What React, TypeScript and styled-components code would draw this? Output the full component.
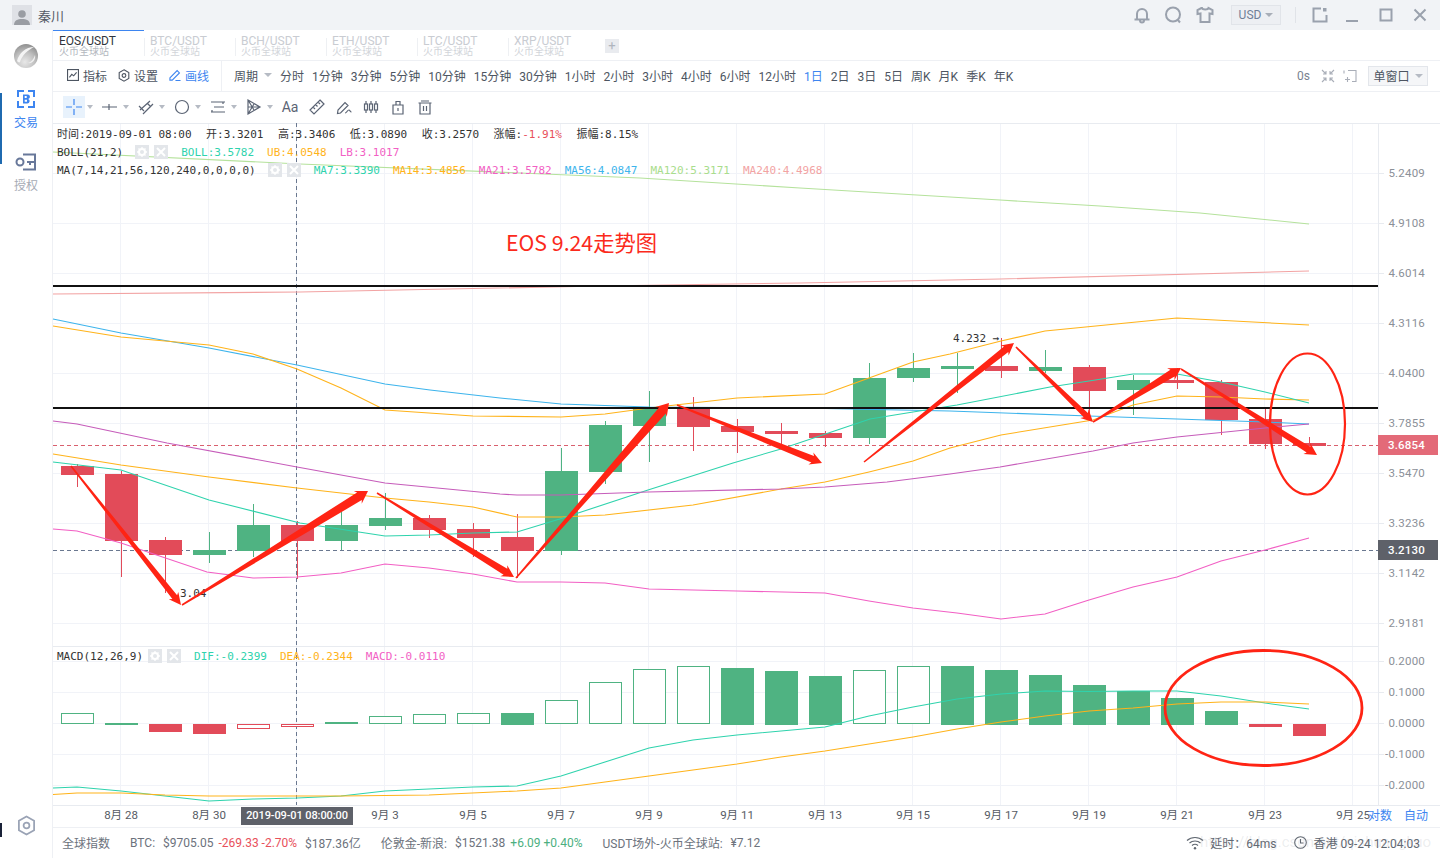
import React from "react";
import styled, { createGlobalStyle } from "styled-components";

const UI_FONT = `Roboto, "Noto Sans CJK SC", sans-serif`;
const MONO_FONT = `"DejaVu Sans Mono", "Noto Sans CJK SC", monospace`;

const GlobalStyle = createGlobalStyle`
  html, body { margin: 0; padding: 0; background: #fff; }
  body { font-family: ${UI_FONT}; overflow: hidden; }
`;

/* ---------- page frame ---------- */
const Page = styled.div`
  width: 1440px;
  height: 858px;
  display: flex;
  flex-direction: column;
  overflow: hidden;
  background: #fff;
`;
const TitleBar = styled.header`
  height: 30px;
  flex: none;
  display: flex;
  align-items: center;
  background: #f1f3f6;
  padding: 0 12px;
`;
const Avatar = styled.div`
  width: 20px;
  height: 20px;
  background: #dfe1e6;
  display: flex;
  align-items: flex-end;
  justify-content: center;
  overflow: hidden;
`;
const UserName = styled.span`
  margin-left: 6px;
  font-size: 13px;
  color: #555b66;
`;
const TitleActions = styled.div`
  margin-left: auto;
  display: flex;
  align-items: center;
  color: #9aa1ad;
`;
const TitleSlot = styled.span<{ $w: number }>`
  width: ${(p) => p.$w}px;
  display: flex;
  justify-content: center;
`;
const CurrencyBox = styled.div`
  width: 50px;
  height: 20px;
  margin: 0 14px 0 10px;
  box-sizing: border-box;
  border: 1px solid #e1e4e9;
  background: #edeff3;
  display: flex;
  align-items: center;
  justify-content: center;
  gap: 4px;
  font-size: 12px;
  color: #6f7f98;
`;
const TitleDivider = styled.span`
  width: 1px;
  height: 16px;
  background: #e0e3e8;
`;
const Shell = styled.div`
  flex: 1;
  display: flex;
  min-height: 0;
`;

/* ---------- left rail ---------- */
const Rail = styled.nav`
  width: 53px;
  flex: none;
  box-sizing: border-box;
  position: relative;
  border-right: 1px solid #eef0f4;
  display: flex;
  flex-direction: column;
  align-items: center;
  padding-top: 13px;
`;
const RailMark = styled.span<{ $top: number; $h: number; $c: string }>`
  position: absolute;
  left: 0;
  top: ${(p) => p.$top}px;
  width: 2px;
  height: ${(p) => p.$h}px;
  background: ${(p) => p.$c};
`;
const RailItem = styled.div<{ $active?: boolean; $gap: number }>`
  margin-top: ${(p) => p.$gap}px;
  display: flex;
  flex-direction: column;
  align-items: center;
  gap: 8px;
  font-size: 12px;
  line-height: 15px;
  color: ${(p) => (p.$active ? "#3d85f0" : "#a6abb5")};
`;
const RailFoot = styled.div`
  margin-top: auto;
  margin-bottom: 21px;
  color: #9aa3b5;
`;
const Main = styled.main`
  flex: 1;
  display: flex;
  flex-direction: column;
  min-width: 0;
`;

/* ---------- symbol tabs ---------- */
const TabRow = styled.div`
  height: 30px;
  flex: none;
  display: flex;
  align-items: stretch;
`;
const Tab = styled.div<{ $active?: boolean }>`
  width: 91px;
  box-sizing: border-box;
  padding: 4px 0 0 6px;
  position: relative;
  border-top: 1px solid ${(p) => (p.$active ? "#3d85f0" : "transparent")};
  color: ${(p) => (p.$active ? "#30343c" : "#c9ccd2")};
  &:not(:first-child)::before {
    content: "";
    position: absolute;
    left: 0;
    top: 7px;
    height: 18px;
    width: 1px;
    background: #eef0f3;
  }
`;
const TabSymbol = styled.div`
  font-size: 12px;
  line-height: 12px;
`;
const TabVenue = styled.div<{ $active?: boolean }>`
  font-size: 10px;
  line-height: 10px;
  color: ${(p) => (p.$active ? "#b3b7be" : "#d2d5da")};
`;
const AddTab = styled.div`
  width: 14px;
  height: 14px;
  align-self: center;
  margin: 1px 0 0 6px;
  background: #e9ebef;
  color: #b0b5bd;
  font-size: 13px;
  line-height: 13px;
  text-align: center;
`;

/* ---------- period toolbar ---------- */
const PeriodBar = styled.div`
  height: 32px;
  flex: none;
  box-sizing: border-box;
  border-top: 1px solid #eef0f4;
  border-bottom: 1px solid #eef0f4;
  display: flex;
  align-items: center;
  font-size: 12px;
  color: #4d5561;
`;
const ToolGroup = styled.div`
  display: flex;
  align-items: center;
  gap: 11px;
  height: 100%;
  box-sizing: border-box;
  padding: 0 12px 2px 14px;
  border-right: 1px solid #eef0f4;
`;
const ToolLink = styled.span<{ $blue?: boolean }>`
  display: flex;
  align-items: center;
  gap: 4px;
  color: ${(p) => (p.$blue ? "#3d85f0" : "#4d5561")};
`;
const Periods = styled.div`
  display: flex;
  align-items: center;
  gap: 8px;
  padding: 0 0 2px 12px;
`;
const Period = styled.span<{ $on?: boolean }>`
  color: ${(p) => (p.$on ? "#3d85f0" : "#4d5561")};
  white-space: nowrap;
`;
const PeriodLabel = styled.span`
  display: flex;
  align-items: center;
  gap: 6px;
`;
const Caret = styled.i<{ $c?: string }>`
  display: block;
  width: 0;
  height: 0;
  border-left: 4px solid transparent;
  border-right: 4px solid transparent;
  border-top: 4px solid ${(p) => p.$c ?? "#b6bbc4"};
`;
const SmallCaret = styled(Caret)`
  border-left-width: 3px;
  border-right-width: 3px;
`;
const BarRight = styled.div`
  margin-left: auto;
  display: flex;
  align-items: center;
  padding: 0 12px 1px 0;
  color: #7a8290;
`;
const Countdown = styled.span`
  margin-right: 11px;
`;
const BarIcons = styled.span`
  display: flex;
  align-items: center;
  gap: 8px;
  color: #a9aeb8;
`;
const WindowSelect = styled.div`
  width: 60px;
  height: 20px;
  margin-left: 11px;
  box-sizing: border-box;
  border: 1px solid #e3e6eb;
  background: #f5f6f8;
  display: flex;
  align-items: center;
  justify-content: center;
  gap: 5px;
  color: #4d5561;
`;

/* ---------- drawing toolbar ---------- */
const DrawBar = styled.div`
  height: 31px;
  flex: none;
  box-sizing: border-box;
  padding: 4px 0 0 10px;
  display: flex;
  align-items: flex-start;
  color: #5b6474;
`;
const DrawTool = styled.div`
  width: 36px;
  display: flex;
  align-items: center;
  gap: 2px;
`;
const DrawButton = styled.div<{ $on?: boolean }>`
  width: 22px;
  height: 22px;
  flex: none;
  display: flex;
  align-items: center;
  justify-content: center;
  background: ${(p) => (p.$on ? "#e8f2fc" : "transparent")};
  font-size: 14px;
  color: inherit;
`;
const PlainTools = styled.div`
  display: flex;
  gap: 5px;
`;

/* ---------- chart ---------- */
const ChartPane = styled.section`
  flex: 1;
  position: relative;
  min-height: 0;
`;
const ChartSvg = styled.svg`
  position: absolute;
  left: 0;
  top: 0;
  display: block;
`;
const LegendStack = styled.div`
  position: absolute;
  left: 4px;
  top: 2px;
  display: flex;
  flex-direction: column;
  font-family: ${MONO_FONT};
  font-size: 11px;
  color: #333;
`;
const MacdLegend = styled(LegendStack)`
  top: 524px;
`;
const LegendRow = styled.div`
  height: 18px;
  display: flex;
  align-items: center;
  white-space: nowrap;
`;
const QuoteRow = styled(LegendRow)`
  box-sizing: border-box;
  padding-bottom: 2px;
`;
const Reading = styled.span<{ $c?: string; $gap?: number }>`
  margin-left: ${(p) => p.$gap ?? 13}px;
  color: ${(p) => p.$c ?? "inherit"};
  &:first-child { margin-left: 0; }
`;
const MiniButton = styled.span<{ $gap: number }>`
  width: 14px;
  height: 14px;
  margin-left: ${(p) => p.$gap}px;
  background: #e3e6ea;
  display: flex;
  align-items: center;
  justify-content: center;
  flex: none;
`;
const ScaleSwitch = styled.div`
  position: absolute;
  right: 12px;
  bottom: 2px;
  display: flex;
  gap: 12px;
  font-size: 12px;
  line-height: 18px;
  color: #3d85f0;
`;

/* ---------- status strip ---------- */
const StatusBar = styled.footer`
  height: 31px;
  flex: none;
  box-sizing: border-box;
  position: relative;
  border-top: 1px solid #eef0f4;
  padding: 0 20px 1px 9px;
  display: flex;
  align-items: center;
  font-size: 12px;
  color: #6c727c;
  white-space: nowrap;
`;
const StatusGroup = styled.div`
  display: flex;
  align-items: center;
  gap: 8px;
  margin-right: 20px;
`;
const Delta = styled.span<{ $up?: boolean }>`
  color: ${(p) => (p.$up ? "#4caf80" : "#e8505b")};
`;
const MoveDelta = styled(Delta)`
  margin-left: -3px;
`;
const StatusRight = styled.div`
  margin-left: auto;
  display: flex;
  align-items: center;
  gap: 6px;
  color: #5f6670;
`;
const StatusSpacer = styled.span`
  width: 6px;
`;
const Watermark = styled.span`
  position: absolute;
  right: 9px;
  top: 5px;
  font-size: 15px;
  color: rgba(150, 155, 165, 0.18);
  pointer-events: none;
`;

/* ---------- icons ---------- */
const Ic = ({ w = 16, h = 16, vb, children, sw = 1.2 }: { w?: number; h?: number; vb?: string; children: React.ReactNode; sw?: number }) => (
  <svg width={w} height={h} viewBox={vb ?? `0 0 ${w} ${h}`} fill="none" stroke="currentColor" strokeWidth={sw} style={{ display: "block", flex: "none" }}>
    {children}
  </svg>
);

const IconIndicator = () => (
  <Ic w={12} h={12} vb="0 0 13 13">
    <rect x=".6" y=".6" width="11.8" height="11.8" />
    <path d="M2.600 9l2.600-3.200 2 1.600L10.400 3.600" />
  </Ic>
);
const IconHex = ({ w = 12, h = 13 }: { w?: number; h?: number }) => (
  <Ic w={w} h={h} vb="0 0 13 14">
    <path d="M6.500.8l5.200 3v6.400l-5.200 3-5.200-3V3.800z" />
    <circle cx="6.500" cy="7" r="2" />
  </Ic>
);
const IconPen = () => (
  <Ic w={12} h={12} vb="0 0 13 13">
    <path d="M1 9.500L8.800 1.700l2.500 2.500L3.500 12H1zM7 12.500h5.500" />
  </Ic>
);

const symbols = ["EOS/USDT", "BTC/USDT", "BCH/USDT", "ETH/USDT", "LTC/USDT", "XRP/USDT"];
const periods = ["分时", "1分钟", "3分钟", "5分钟", "10分钟", "15分钟", "30分钟", "1小时", "2小时", "3小时", "4小时", "6小时", "12小时", "1日", "2日", "3日", "5日", "周K", "月K", "季K", "年K"];

/* ---------- market data, in pixel space of the pane ---------- */
type Candle = [number, number, number, number, "r" | "g"];
const candles: Candle[] = [
  [466, 475, 464, 487, "r"], [474, 541, 471, 577, "r"], [540, 555, 537, 593, "r"], [550, 555, 532, 563, "g"],
  [525, 551, 504, 557, "g"], [525, 541, 521, 579, "r"], [525, 541, 512, 550, "g"], [518, 526, 493, 530, "g"],
  [518, 530, 515, 538, "r"], [529, 538, 523, 557, "r"], [537, 551, 514, 578, "r"], [471, 551, 448, 555, "g"],
  [425, 472, 421, 484, "g"], [407, 426, 391, 462, "g"], [407, 427, 397, 451, "r"], [426, 432, 419, 453, "r"],
  [431, 434, 423, 445, "r"], [433, 438, 431, 447, "r"], [378, 438, 363, 444, "g"], [368, 378, 353, 382, "g"],
  [366, 369, 353, 393, "g"], [366, 371, 338, 378, "r"], [367, 371, 350, 373, "g"], [367, 391, 365, 420, "r"],
  [380, 390, 375, 415, "g"], [380, 383, 368, 389, "r"], [382, 420, 380, 435, "r"], [419, 444, 407, 449, "r"],
  [443, 446, 437, 446, "r"],
];
const candleX = (i: number) => 77 + i * 44;

type Bar = [number, number, "r" | "g", boolean];
const macdBars: Bar[] = [
  [713, 724, "g", false], [723, 725, "g", true], [724, 732, "r", true], [724, 734, "r", true], [724, 729, "r", false],
  [724, 727, "r", false], [722, 724, "g", false], [716, 724, "g", false], [714, 724, "g", false], [713, 724, "g", false],
  [713, 725, "g", true], [700, 724, "g", false], [682, 724, "g", false], [669, 724, "g", false], [666, 724, "g", false],
  [668, 725, "g", true], [671, 725, "g", true], [676, 725, "g", true], [670, 724, "g", false], [666, 724, "g", false],
  [666, 725, "g", true], [670, 725, "g", true], [675, 725, "g", true], [685, 725, "g", true], [691, 725, "g", true],
  [698, 725, "g", true], [711, 725, "g", true], [724, 727, "r", true], [724, 736, "r", true],
];

const curves: { c: string; p: string }[] = [
  { c: "#b5e29c", p: "53,152 300,164 640,178 800,188 1000,200 1100,206 1200,213 1309,224" },
  { c: "#f2a3a3", p: "53,294 300,292 600,286 800,283 1000,279 1309,271" },
  { c: "#3db4ec", p: "53,319 121,333 209,348 297,365 385,384 430,390 500,398 561,404 649,407 800,408 950,411 1089,416 1177,419 1265,422 1309,424" },
  { c: "#ffb31a", p: "53,326 121,337 209,345 253,354 297,369 341,388 385,410 473,416 561,417 605,414 649,408 737,398 825,394 869,378 913,362 950,354 1001,341 1045,331 1177,318 1309,325" },
  { c: "#ffb31a", p: "53,454 121,465 209,477 297,488 385,498 429,502 473,507 517,517 561,517 605,515 693,505 781,489 825,482 869,472 913,461 950,448 1001,435 1093,420 1133,405 1177,396 1221,397 1265,399 1309,400" },
  { c: "#2fd3ad", p: "53,462 121,470 209,500 300,523 385,536 429,535 473,533 517,532 563,518 648,490 733,463 781,449 870,419 913,412 957,405 1050,387 1089,381 1133,374 1177,374 1221,382 1265,392 1309,403" },
  { c: "#c65cba", p: "53,421 77,424 167,443 297,467 385,483 500,494 517,495 561,495 648,492 781,489 825,487 887,482 950,474 1000,467 1093,451 1133,443 1177,437 1265,428 1309,424" },
  { c: "#f25fc4", p: "53,529 77,531 121,543 207,572 253,578 297,577 341,573 385,564 429,568 473,574 517,582 561,582 605,583 649,589 737,591 825,593 869,601 913,608 957,613 1001,619 1045,614 1089,600 1133,587 1177,577 1221,561 1265,550 1309,538" },
  { c: "#2fd3ad", p: "53,788 77,787 121,791 165,796 209,801 253,799 297,798 341,796 385,791 429,789 473,787 517,786 561,776 605,762 649,748 693,740 737,735 781,731 825,727 869,716 913,707 957,699 1001,694 1045,691 1089,691.500 1133,691 1177,691 1221,696 1265,703 1309,709" },
  { c: "#ffb31a", p: "53,794.500 77,793 121,793 165,795 209,796 297,796 341,796 429,795 517,791 561,788 605,782 649,776 693,770 737,764 781,757 825,751 869,744 913,737 957,729 1001,722 1045,716 1089,711 1133,708 1177,704 1221,702 1265,702 1309,704" },
];

const priceTicks: [number, string][] = [
  [173, "5.2409"], [223, "4.9108"], [273, "4.6014"], [323, "4.3116"], [373, "4.0400"], [423, "3.7855"],
  [473, "3.5470"], [523, "3.3236"], [573, "3.1142"], [623, "2.9181"],
];
const macdTicks: [number, string][] = [[661, "0.2000"], [692, "0.1000"], [723, "0.0000"], [754, "-0.1000"], [785, "-0.2000"]];
const dateTicks: [number, string][] = [
  [121, "8月 28"], [209, "8月 30"], [385, "9月 3"], [473, "9月 5"], [561, "9月 7"], [649, "9月 9"], [737, "9月 11"], [825, "9月 13"],
  [913, "9月 15"], [1001, "9月 17"], [1089, "9月 19"], [1177, "9月 21"], [1265, "9月 23"], [1353, "9月 25"],
];

/* hand-drawn annotation arrows: a tapered shaft ending in a small head */
const arrowPoints = (x1: number, y1: number, x2: number, y2: number, w: number) => {
  const len = Math.hypot(x2 - x1, y2 - y1);
  const dx = (x2 - x1) / len;
  const dy = (y2 - y1) / len;
  const nx = -dy;
  const ny = dx;
  const nk = 10;
  const bk = 12;
  const hw = w / 2 + 3;
  const tail = 0.8;
  const pts = [
    [x1 + nx * tail, y1 + ny * tail],
    [x2 - dx * nk + (nx * w) / 2, y2 - dy * nk + (ny * w) / 2],
    [x2 - dx * bk + nx * hw, y2 - dy * bk + ny * hw],
    [x2, y2],
    [x2 - dx * bk - nx * hw, y2 - dy * bk - ny * hw],
    [x2 - dx * nk - (nx * w) / 2, y2 - dy * nk - (ny * w) / 2],
    [x1 - nx * tail, y1 - ny * tail],
  ];
  return pts.map((p) => p.map((v) => v.toFixed(1)).join(",")).join(" ");
};
const arrows: [number, number, number, number, number][] = [
  [71, 466, 181, 605, 6],
  [182, 605, 368, 491, 9],
  [377, 493, 514, 577, 7],
  [516, 578, 669, 403, 9],
  [677, 405, 822, 463, 7],
  [864, 462, 1014, 343, 7],
  [1016, 347, 1093, 422, 6],
  [1093, 422, 1181, 368, 8],
  [1181, 369, 1317, 455, 7],
];

const RED = "#e24b59";
const GREEN = "#4fb382";

const Chart = () => (
  <ChartSvg width={1387} height={682} viewBox="53 123 1387 682" style={{ overflow: "visible" }}>
    {/* grid */}
    <g stroke="#f1f3f8" strokeWidth={1} shapeRendering="crispEdges">
      {priceTicks.map(([y]) => <line key={y} x1={53} x2={1378} y1={y + 0.5} y2={y + 0.5} />)}
      {macdTicks.map(([y]) => <line key={y} x1={53} x2={1378} y1={y + 0.5} y2={y + 0.5} />)}
      {Array.from({ length: 15 }, (_, i) => (
        <line key={i} x1={120.5 + i * 88} x2={120.5 + i * 88} y1={123} y2={805} />
      ))}
    </g>
    <g stroke="#e8ebf0" shapeRendering="crispEdges">
      <line x1={53} x2={1440} y1={123.5} y2={123.5} />
      <line x1={53} x2={1378} y1={646.5} y2={646.5} strokeWidth={1} />
      <line x1={53} x2={1440} y1={805.5} y2={805.5} />
      <line x1={1378.5} x2={1378.5} y1={123} y2={805} />
      {[...priceTicks, ...macdTicks].map(([y]) => <line key={y} x1={1378} x2={1384} y1={y + 0.5} y2={y + 0.5} />)}
    </g>

    {/* price line and crosshair */}
    <line x1={53} x2={1378} y1={445.5} y2={445.5} stroke="#d9606e" strokeDasharray="4 3" />
    <line x1={53} x2={1378} y1={550.5} y2={550.5} stroke="#6a7890" strokeDasharray="4 3" />
    <line x1={296.5} x2={296.5} y1={123} y2={805} stroke="#6a7890" strokeDasharray="4 3" />

    {/* candles */}
    <g shapeRendering="crispEdges">
      {candles.map(([top, bottom, hi, lo, side], i) => (
        <g key={i} fill={side === "r" ? RED : GREEN}>
          <rect x={candleX(i)} y={hi} width={1} height={lo - hi} />
          <rect x={candleX(i) - 16} y={top} width={33} height={bottom - top} />
        </g>
      ))}
      {macdBars.map(([top, bottom, side, solid], i) =>
        solid ? (
          <rect key={i} x={candleX(i) - 16} y={top} width={33} height={bottom - top} fill={side === "r" ? RED : GREEN} />
        ) : (
          <rect key={i} x={candleX(i) - 15.5} y={top + 0.5} width={32} height={bottom - top - 1} fill="#fff" stroke={side === "r" ? RED : GREEN} />
        )
      )}
    </g>

    {/* indicator curves */}
    <g fill="none" strokeWidth={1.1}>
      {curves.map((k, i) => <polyline key={i} points={k.p} stroke={k.c} />)}
    </g>

    {/* support and resistance */}
    <g stroke="#111" strokeWidth={2} shapeRendering="crispEdges">
      <line x1={53} x2={1378} y1={286} y2={286} />
      <line x1={53} x2={1378} y1={408} y2={408} />
    </g>

    {/* extreme markers */}
    <text x={953} y={342} fontFamily={MONO_FONT} fontSize={11} fill="#333">4.232 →</text>
    <text x={180} y={597} fontFamily={MONO_FONT} fontSize={11} fill="#333">3.04</text>

    {/* trader's annotations */}
    <g fill="#ff2414">
      {arrows.map((a, i) => <polygon key={i} points={arrowPoints(...a)} />)}
    </g>
    <g fill="none" stroke="#ff2414">
      <ellipse cx={1307.5} cy={424} rx={37.500} ry={70.500} strokeWidth={2.2} />
      <ellipse cx={1263.5} cy={708} rx={98.500} ry={57.500} strokeWidth={2.8} />
    </g>
    <text x={506} y={251} fontFamily={`"Noto Sans CJK SC", sans-serif`} fontSize={21.3} fill="#fb2a1c">EOS 9.24走势图</text>

    {/* axes */}
    <g fontFamily={UI_FONT} fontSize={11.5} fill="#8b9098" textAnchor="end" letterSpacing={0.2}>
      {[...priceTicks, ...macdTicks].map(([y, t]) => <text key={t} x={1425} y={y + 4}>{t}</text>)}
    </g>
    <g fontFamily={UI_FONT} fontSize={11.5} fill="#565b64" textAnchor="middle">
      {dateTicks.map(([x, t]) => <text key={t} x={x} y={819}>{t}</text>)}
    </g>
    <rect x={241} y={807} width={112} height={18} fill="#5e6169" />
    <text x={297} y={819} textAnchor="middle" fontFamily={UI_FONT} fontSize={11} fontWeight={500} letterSpacing={-0.1} fill="#fff">2019-09-01 08:00:00</text>
    <rect x={1378} y={435} width={60} height={20} fill="#e36a78" />
    <text x={1425} y={449} textAnchor="end" fontFamily={UI_FONT} fontSize={11.5} fontWeight={500} letterSpacing={0.2} fill="#fff">3.6854</text>
    <rect x={1378} y={540} width={60} height={20} fill="#5e6169" />
    <text x={1425} y={554} textAnchor="end" fontFamily={UI_FONT} fontSize={11.5} fontWeight={500} letterSpacing={0.2} fill="#fff">3.2130</text>
  </ChartSvg>
);

const MiniGear = () => (
  <svg width="10" height="10" viewBox="0 0 10 10" style={{ display: "block" }}>
    <circle cx="5" cy="5" r="3" fill="none" stroke="#fff" strokeWidth="2" />
    <path d="M5 0v2M5 8v2M0 5h2M8 5h2M1.500 1.500l1.400 1.400M7.100 7.100l1.400 1.400M8.500 1.500L7.100 2.900M2.900 7.100L1.500 8.500" stroke="#fff" strokeWidth="1.300" />
  </svg>
);
const MiniClose = () => (
  <svg width="10" height="10" viewBox="0 0 10 10" style={{ display: "block" }}>
    <path d="M1 1l8 8M9 1l-8 8" stroke="#fff" strokeWidth="2" />
  </svg>
);

export default function App() {
  return (
    <Page>
      <GlobalStyle />
      <TitleBar>
        <Avatar>
          <svg width="16" height="17" viewBox="0 0 16 17" style={{ display: "block" }}>
            <circle cx="8" cy="6" r="3.800" fill="#9a9da3" />
            <path d="M0 17c0-4.500 3.500-6 8-6s8 1.500 8 6z" fill="#9a9da3" />
          </svg>
        </Avatar>
        <UserName>秦川</UserName>
        <TitleActions>
          <TitleSlot $w={31}>
            <Ic w={18} h={18} sw={2}>
              <path d="M4 13V8a5 5 0 0 1 10 0v5M1.500 13.500h15M7 14.500a2 2 0 0 0 4 0" />
            </Ic>
          </TitleSlot>
          <TitleSlot $w={32}>
            <Ic w={18} h={18} sw={2}>
              <circle cx="9" cy="8.500" r="7" />
              <path d="M13.500 13.500l2.500 3" />
            </Ic>
          </TitleSlot>
          <TitleSlot $w={32}>
            <Ic w={18} h={18} sw={2}>
              <path d="M5.500 2L1.500 4v4l3-.5V16h9V7.500l3 .5V4l-4-2c-.5 2-6 2-6.500 0z" />
            </Ic>
          </TitleSlot>
          <CurrencyBox>
            USD
            <Caret $c="#a8aeb8" />
          </CurrencyBox>
          <TitleDivider />
          <TitleSlot $w={48}>
            <Ic w={16} h={16} sw={2}>
              <path d="M9 1.500H1.500v13h13V8" />
              <rect x="11" y="1" width="3.500" height="3.500" fill="currentColor" stroke="none" />
            </Ic>
          </TitleSlot>
          <TitleSlot $w={16}>
            <Ic w={14} h={16} sw={2}>
              <path d="M1 14h12" />
            </Ic>
          </TitleSlot>
          <TitleSlot $w={52}>
            <Ic w={14} h={14} sw={2}>
              <rect x="1.500" y="1.500" width="11" height="11" />
            </Ic>
          </TitleSlot>
          <TitleSlot $w={16}>
            <Ic w={14} h={14} sw={2}>
              <path d="M1.500 1.500l11 11M12.500 1.500l-11 11" />
            </Ic>
          </TitleSlot>
        </TitleActions>
      </TitleBar>
      <Shell>
        <Rail>
          <RailMark $top={63} $h={71} $c="#1f6ab0" />
          <RailMark $top={793} $h={14} $c="#1a2238" />
          <svg width="26" height="26" viewBox="0 0 26 26" style={{ display: "block", flex: "none" }}>
            <defs>
              <radialGradient id="orb" cx="0.45" cy="0.75" r="0.75">
                <stop offset="0" stopColor="#e8e8e8" />
                <stop offset="0.55" stopColor="#c0c0c0" />
                <stop offset="1" stopColor="#8f8f8f" />
              </radialGradient>
            </defs>
            <circle cx="13" cy="13" r="12" fill="url(#orb)" />
            <path d="M4 18C6 10 13 4 21 4 15 7 9 12 7 19c-1 1-2 0-3-1z" fill="#f4f4f4" />
            <path d="M15 20c3-1 6-4 7-8 1 5-3 9-7 8z" fill="#efefef" />
          </svg>
          <RailItem $active $gap={21}>
            <svg width="18" height="18" viewBox="0 0 18 18" style={{ display: "block" }}>
              <path d="M7 1H1v6M11 1h6v6M7 17H1v-6M11 17h6v-6" fill="none" stroke="#3d85f0" strokeWidth="2" />
              <path d="M6 4.500v9h4.200a2.400 2.400 0 0 0 1-4.600 2.200 2.200 0 0 0-1-4.400z" fill="#3d85f0" />
              <path d="M7.700 6h2v2h-2zM7.700 9.700h2.300v2.100H7.700z" fill="#fff" />
            </svg>
            交易
          </RailItem>
          <RailItem $gap={22}>
            <svg width="22" height="18" viewBox="0 0 22 18" style={{ display: "block" }}>
              <path d="M8 1.500h12v15H8M20 9h-8" fill="none" stroke="#68789a" strokeWidth="2" />
              <circle cx="5" cy="9" r="3.500" fill="none" stroke="#68789a" strokeWidth="2" />
              <path d="M15 9v3" stroke="#68789a" strokeWidth="2" />
            </svg>
            授权
          </RailItem>
          <RailFoot>
            <IconHex w={19} h={23} />
          </RailFoot>
        </Rail>
        <Main>
          <TabRow>
            {symbols.map((s, i) => (
              <Tab key={s} $active={i === 0}>
                <TabSymbol>{s}</TabSymbol>
                <TabVenue $active={i === 0}>火币全球站</TabVenue>
              </Tab>
            ))}
            <AddTab>+</AddTab>
          </TabRow>
          <PeriodBar>
            <ToolGroup>
              <ToolLink><IconIndicator />指标</ToolLink>
              <ToolLink><IconHex />设置</ToolLink>
              <ToolLink $blue><IconPen />画线</ToolLink>
            </ToolGroup>
            <Periods>
              <PeriodLabel>周期<Caret /></PeriodLabel>
              {periods.map((p) => <Period key={p} $on={p === "1日"}>{p}</Period>)}
            </Periods>
            <BarRight>
              <Countdown>0s</Countdown>
              <BarIcons>
                <Ic w={14} h={14} sw={1.1}>
                  <path d="M1 1l4 4M5 2v3H2M13 1L9 5M9 2v3h3M1 13l4-4M5 12V9H2M13 13L9 9M9 12V9h3" />
                </Ic>
                <Ic w={14} h={14} sw={1.1}>
                  <path d="M5 1.500h8v11H9M1 1.500v3M2 10.500h5M4.500 8v5" />
                </Ic>
              </BarIcons>
              <WindowSelect>单窗口<Caret /></WindowSelect>
            </BarRight>
          </PeriodBar>
          <DrawBar>
            <DrawTool>
              <DrawButton $on>
                <svg width="16" height="16" viewBox="0 0 16 16" style={{ display: "block" }}>
                  <path d="M8 0v6M8 10v6M0 8h6M10 8h6" stroke="#3d85f0" strokeWidth="1.200" />
                </svg>
              </DrawButton>
              <SmallCaret />
            </DrawTool>
            <DrawTool>
              <DrawButton>
                <Ic><path d="M0 8h15M7 5v6" /></Ic>
              </DrawButton>
              <SmallCaret />
            </DrawTool>
            <DrawTool>
              <DrawButton>
                <Ic><path d="M2 11L12 2M5 15L15 5M1 7l5 5M9 4l4 4" /></Ic>
              </DrawButton>
              <SmallCaret />
            </DrawTool>
            <DrawTool>
              <DrawButton>
                <Ic w={16} h={16}><circle cx="8" cy="8" r="6.500" /></Ic>
              </DrawButton>
              <SmallCaret />
            </DrawTool>
            <DrawTool>
              <DrawButton>
                <Ic><path d="M1 3h14M4 8h10M1 13h14M13 3v2M2 11v2" /></Ic>
              </DrawButton>
              <SmallCaret />
            </DrawTool>
            <DrawTool>
              <DrawButton>
                <Ic><path d="M2 1v14L14 8zM2 1l6 10M2 15l6-10M2 8h12" /></Ic>
              </DrawButton>
              <SmallCaret />
            </DrawTool>
            <PlainTools>
              <DrawButton>Aa</DrawButton>
              <DrawButton>
                <Ic><path d="M11 1l4 4L5 15l-4-4zM9 3l2 2M6.500 5.500l2 2M4 8l2 2" /></Ic>
              </DrawButton>
              <DrawButton>
                <Ic>
                  <path d="M1.500 14.500l.5-3.500L9 3.500l3 3-7.500 7.500zM9 14c2 0 2-3 4-3 1 0 1 2 2.500 2" />
                </Ic>
              </DrawButton>
              <DrawButton>
                <Ic>
                  <rect x="1.500" y="5" width="3" height="6" />
                  <rect x="6.500" y="5" width="3" height="6" />
                  <rect x="11.500" y="5" width="3" height="6" />
                  <path d="M3 2v3M3 11v3M8 2v3M8 11v3M13 2v3M13 11v3" />
                </Ic>
              </DrawButton>
              <DrawButton>
                <Ic><path d="M3 6h10v9H3zM8 9v3M6 6V2.500h4V6" /></Ic>
              </DrawButton>
              <DrawButton>
                <Ic><path d="M1.500 4h13M4 2h8M3 4v11h10V4M6.500 7v5M9.500 7v5" /></Ic>
              </DrawButton>
            </PlainTools>
          </DrawBar>
          <ChartPane>
            <Chart />
            <LegendStack>
              <QuoteRow>
                <Reading>时间:2019-09-01 08:00</Reading>
                <Reading $gap={14.5}>开:3.3201</Reading>
                <Reading $gap={14.5}>高:3.3406</Reading>
                <Reading $gap={14.5}>低:3.0890</Reading>
                <Reading $gap={14.5}>收:3.2570</Reading>
                <Reading $gap={14.5}>涨幅:<Delta>-1.91%</Delta></Reading>
                <Reading $gap={14.5}>振幅:8.15%</Reading>
              </QuoteRow>
              <LegendRow>
                <Reading>BOLL(21,2)</Reading>
                <MiniButton $gap={12}><MiniGear /></MiniButton>
                <MiniButton $gap={5}><MiniClose /></MiniButton>
                <Reading $c="#2fd3ad">BOLL:3.5782</Reading>
                <Reading $c="#ffb31a">UB:4.0548</Reading>
                <Reading $c="#f25fc4">LB:3.1017</Reading>
              </LegendRow>
              <LegendRow>
                <Reading>MA(7,14,21,56,120,240,0,0,0,0)</Reading>
                <MiniButton $gap={12}><MiniGear /></MiniButton>
                <MiniButton $gap={5}><MiniClose /></MiniButton>
                <Reading $c="#2fd3ad">MA7:3.3390</Reading>
                <Reading $c="#ffb31a">MA14:3.4856</Reading>
                <Reading $c="#f25fc4">MA21:3.5782</Reading>
                <Reading $c="#3db4ec">MA56:4.0847</Reading>
                <Reading $c="#a9dd8c">MA120:5.3171</Reading>
                <Reading $c="#f2a3a3">MA240:4.4968</Reading>
              </LegendRow>
            </LegendStack>
            <MacdLegend>
              <LegendRow>
                <Reading>MACD(12,26,9)</Reading>
                <MiniButton $gap={5}><MiniGear /></MiniButton>
                <MiniButton $gap={5}><MiniClose /></MiniButton>
                <Reading $c="#2fd3ad">DIF:-0.2399</Reading>
                <Reading $c="#ffb31a">DEA:-0.2344</Reading>
                <Reading $c="#f25fc4">MACD:-0.0110</Reading>
              </LegendRow>
            </MacdLegend>
            <ScaleSwitch>
              <span>对数</span>
              <span>自动</span>
            </ScaleSwitch>
          </ChartPane>
          <StatusBar>
            <StatusGroup>全球指数</StatusGroup>
            <StatusGroup>
              <span>BTC:</span>
              <span>$9705.05</span>
              <MoveDelta>-269.33 -2.70%</MoveDelta>
              <span>$187.36亿</span>
            </StatusGroup>
            <StatusGroup>
              <span>伦敦金-新浪:</span>
              <span>$1521.38</span>
              <MoveDelta $up>+6.09 +0.40%</MoveDelta>
            </StatusGroup>
            <StatusGroup>
              <span>USDT场外-火币全球站:</span>
              <span>¥7.12</span>
            </StatusGroup>
            <StatusRight>
              <Ic w={18} h={14} sw={1.2}>
                <path d="M1 4.500c4.500-4 11.500-4 16 0M3.500 7c3-2.700 8-2.700 11 0M6 9.500c1.800-1.500 4.200-1.500 6 0" />
                <circle cx="9" cy="12.300" r="1.200" fill="currentColor" stroke="none" />
              </Ic>
              <span>延时：64ms</span>
              <StatusSpacer />
              <Ic w={13} h={13} sw={1.1}>
                <circle cx="6.500" cy="6.500" r="5.800" />
                <path d="M6.500 3v4H9.500" />
              </Ic>
              <span>香港 09-24 12:04:03</span>
            </StatusRight>
            <Watermark>https://blog.csdn.net/qishuangkuo</Watermark>
          </StatusBar>
        </Main>
      </Shell>
    </Page>
  );
}
